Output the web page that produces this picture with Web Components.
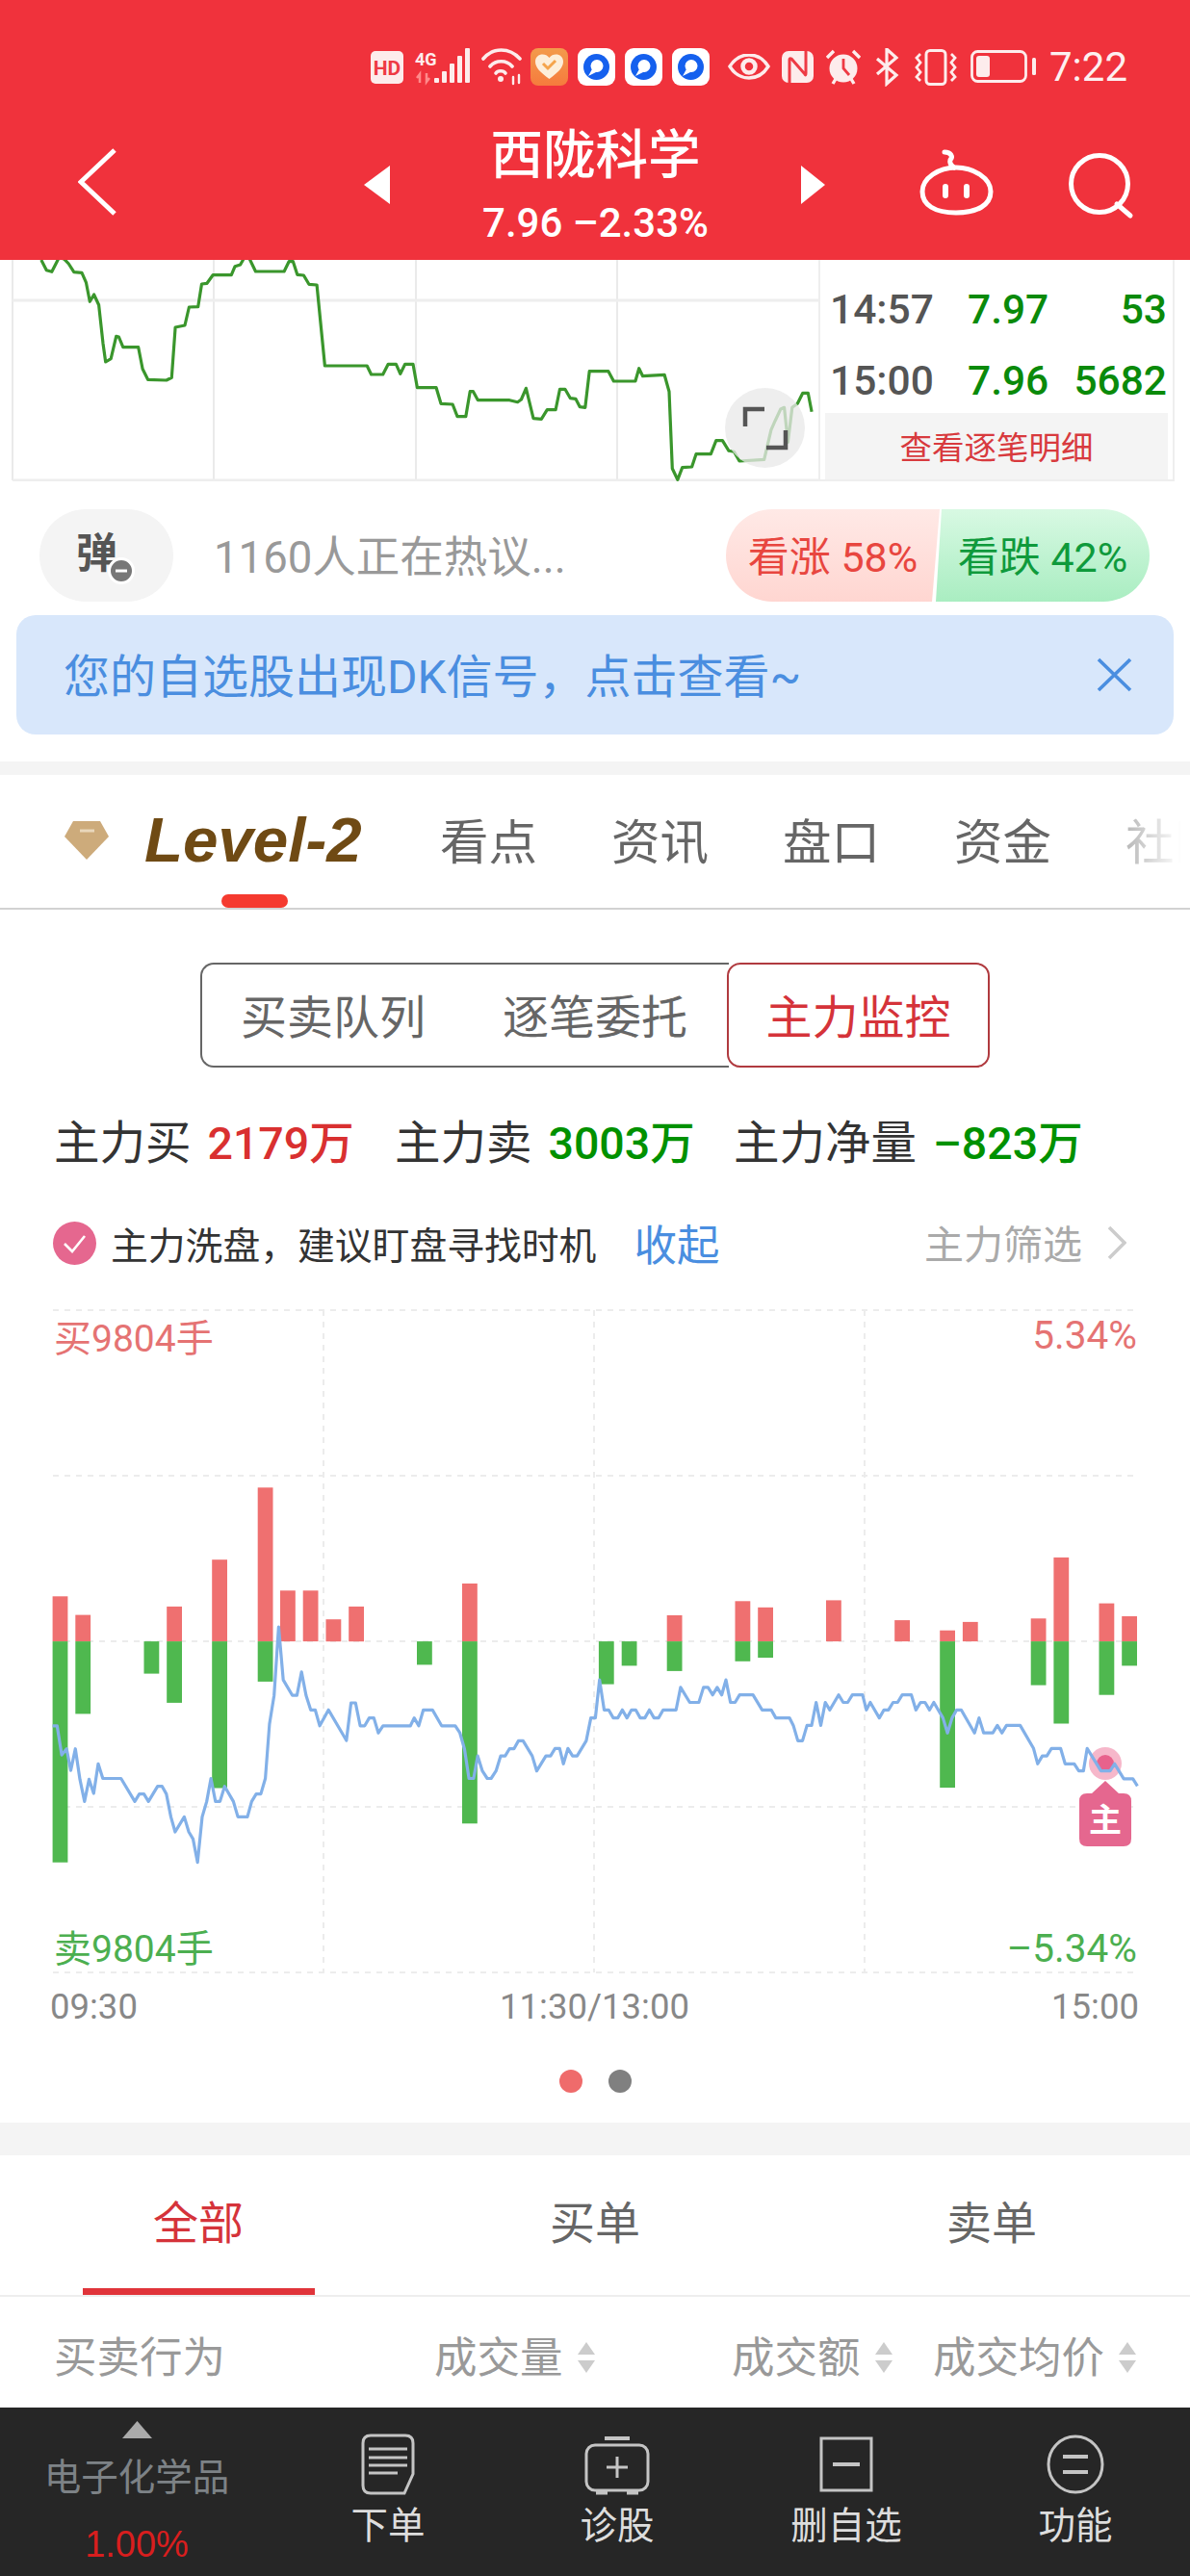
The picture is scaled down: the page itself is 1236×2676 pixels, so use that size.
<!DOCTYPE html>
<html lang="zh"><head><meta charset="utf-8"><title>西陇科学</title>
<style>
html,body{margin:0;padding:0;background:#fff}
body{width:1236px;height:2676px;overflow:hidden;font-family:Roboto,"Noto Sans CJK SC",sans-serif}
</style></head>
<body>
<app-shell>
  <stock-header></stock-header>
  <intraday-panel></intraday-panel>
  <sentiment-row></sentiment-row>
  <notice-banner>您的自选股出现DK信号，点击查看~</notice-banner>
  <level-tabs></level-tabs>
  <monitor-section></monitor-section>
  <trade-tabs></trade-tabs>
  <table-head></table-head>
  <bottom-bar></bottom-bar>
</app-shell>
<script>
function def(name, css, html){
  customElements.define(name, class extends HTMLElement{
    constructor(){super();const r=this.attachShadow({mode:'open'});
      r.innerHTML='<style>'+css+'</style>'+(typeof html==='function'?html():html);}
  });
}
const line=(pts,fx,fy)=>pts.map(p=>fx(p[0]).toFixed(1)+','+fy(p[1]).toFixed(1)).join(' ');

def('app-shell',':host{display:flex;flex-direction:column;width:1236px;height:2676px;overflow:hidden;background:#fff}','<slot></slot>');

/* ---------- header ---------- */
def('status-bar',`:host{display:flex;align-items:flex-start;height:100px;box-sizing:border-box;padding:50px 66px 0 0;justify-content:flex-end;color:#fff}
svg{display:block;flex:none}
.t{font-size:42px;line-height:40px;margin-left:14px;width:80px;white-space:nowrap;color:#fdf0f0}`,`
<svg width="34" height="40" style="margin-top:3px"><rect width="34" height="34" rx="5" fill="#fdecec"/><text x="17" y="25" text-anchor="middle" font-size="21" font-weight="700" font-family="Roboto" fill="#ee3a44">HD</text></svg>
<svg width="57" height="40" style="margin-left:12px"><text x="0" y="18" font-size="18" font-weight="700" font-family="Roboto" fill="#fdecec">4G</text><path d="M5 36V27l-3 4M12 26v9l3-4" stroke="#ff8a8a" stroke-width="2.5" fill="none"/><rect x="20" y="31" width="5" height="5" rx="1" fill="#fdecec"/><rect x="28" y="24" width="5" height="12" rx="1" fill="#fdecec"/><rect x="36" y="16" width="5" height="20" rx="1" fill="#fdecec"/><rect x="44" y="8" width="5" height="28" rx="1" fill="#fdecec"/><rect x="52" y="0" width="5" height="36" rx="1" fill="#fdecec"/></svg>
<svg width="43" height="40" style="margin-left:12px" fill="none" stroke="#fdecec" stroke-width="3.6" stroke-linecap="round"><path d="M2 11C12 -1 29 -1 40 11"/><path d="M9 19C15 12 26 12 32 19"/><path d="M15 26C17 23 23 23 25 26"/><circle cx="20" cy="32" r="3" fill="#fdecec" stroke="none"/><path d="M33 30V37M39 28V36" stroke-width="2.4"/></svg>
<svg width="39" height="40" style="margin-left:8px"><defs><linearGradient id="o" x1="0" y1="0" x2="0" y2="1"><stop offset="0" stop-color="#f39b4c"/><stop offset="1" stop-color="#f67b3d"/></linearGradient></defs><rect width="39" height="39" rx="8" fill="url(#o)"/><path d="M19.5 32C10 25 5 20 5 14C5 6 15 4 19.5 10C24 4 34 6 34 14C34 20 29 25 19.5 32Z" fill="#fdeeda"/><path d="M13 16L18 21L26 13" stroke="#f5a44c" stroke-width="3" fill="none"/></svg>
${[0,1,2].map(()=>`<svg width="39" height="40" style="margin-left:10px"><rect width="39" height="39" rx="9" fill="#fff"/><circle cx="19.5" cy="19.5" r="13.5" fill="#1560ee"/><circle cx="20" cy="18.5" r="6.5" fill="#fff"/><path d="M16 20L11 29L21 24Z" fill="#fff"/></svg>`).join('')}
<svg width="44" height="40" style="margin:6px 0 0 19px" fill="none" stroke="#fdecec"><path d="M2 13C12 -3 32 -3 42 13C32 29 12 29 2 13Z" stroke-width="3.4"/><circle cx="22" cy="13" r="6.5" stroke-width="4.5"/></svg>
<svg width="33" height="40" style="margin:3px 0 0 12px"><rect width="33" height="33" rx="7" fill="#fdecec"/><path d="M8 33V9Q8 7 10 8L24 24Q25 26 25 23V0" stroke="#ee3a44" stroke-width="3" fill="none"/></svg>
<svg width="36" height="40" style="margin:1px 0 0 13px"><circle cx="18" cy="20" r="14.5" fill="#fdecec"/><path d="M18 10V20L24 27" stroke="#ee3a44" stroke-width="2.8" fill="none"/><path d="M1 9L8 2M35 9L28 2M7 36L10 31M29 36L26 31" stroke="#fdecec" stroke-width="3.4"/></svg>
<svg width="27" height="40" style="margin-left:14px" fill="none" stroke="#fdecec" stroke-width="3.2"><path d="M3 11L23 28L13 37V1L23 10L3 27"/></svg>
<svg width="44" height="40" style="margin:1px 0 0 15px" fill="none" stroke="#fdecec"><rect x="12" y="1.5" width="20" height="35" rx="4" stroke-width="3"/><path d="M6 5L2 9L6 14L2 19L6 24L2 29L6 33M38 5L42 9L38 14L42 19L38 24L42 29L38 33" stroke-width="2.8"/></svg>
<svg width="68" height="40" style="margin:2px 0 0 14px"><rect x="1.5" y="1.5" width="56" height="31" rx="6" fill="none" stroke="#fdecec" stroke-width="2.8"/><rect x="6" y="6" width="14" height="22" rx="3" fill="#fdecec"/><rect x="64" y="8" width="4" height="18" rx="1.5" fill="#fdecec"/></svg>
<span class="t">7:22</span>`);

def('stock-header',`:host{display:block;height:270px;background:#f0323c;color:#fff;flex:none}
.nav{display:flex;align-items:flex-start}
svg{display:block;flex:none}
.mid{width:427px;text-align:center}
.title{font-size:54.5px;line-height:60px;margin-top:31px;font-weight:500}
.sub{font-size:42px;line-height:60px;margin-top:11px;font-weight:500}`,`
<status-bar></status-bar>
<div class="nav">
  <svg width="40" height="72" style="margin:54px 0 0 81px" fill="none" stroke="#fff" stroke-width="5"><path d="M38 2L3 35L38 68"/></svg>
  <svg width="27" height="40" style="margin:72px 0 0 257px"><path d="M27 0V40L0 20Z" fill="#fff"/></svg>
  <div class="mid"><div class="title">西陇科学</div><div class="sub">7.96 –2.33%</div></div>
  <svg width="25" height="40" style="margin-top:72px"><path d="M0 0V40L25 20Z" fill="#fff"/></svg>
  <svg width="78" height="70" style="margin:55px 0 0 98px" fill="none" stroke="#fff" stroke-width="5"><path d="M38 19C56 19 74 30 74 44C74 58 60 66 38 66C16 66 3 58 3 44C3 30 20 19 38 19Z"/><path d="M26 3C33 3 35 8 32 11C31 14 33 17 36 19" stroke-linecap="round"/><rect x="24" y="36" width="6" height="15" rx="3" fill="#fff" stroke="none"/><rect x="46" y="36" width="6" height="15" rx="3" fill="#fff" stroke="none"/></svg>
  <svg width="70" height="70" style="margin:58px 0 0 76px" fill="none" stroke="#fff" stroke-width="5"><circle cx="33" cy="33" r="29.5"/><path d="M51 54L65 66" stroke-linecap="round"/></svg>
</div>`);

/* ---------- intraday ---------- */
const green=[[78,30],[88,62],[98,67],[108,35],[112,22],[122,28],[130,42],[140,68],[155,70],[163,100],[170,160],[178,138],[187,170],[195,290],[200,348],[210,338],[220,268],[225,270],[233,302],[262,302],[270,370],[280,403],[315,405],[325,397],[332,240],[350,234],[358,177],[375,176],[382,105],[392,103],[403,77],[438,77],[445,50],[455,45],[462,25],[472,25],[484,66],[538,66],[547,35],[555,35],[563,76],[575,78],[585,106],[600,108],[615,360],[695,360],[703,387],[725,387],[735,355],[750,355],[758,385],[767,355],[782,355],[790,428],[826,428],[835,478],[857,480],[866,518],[882,518],[890,440],[896,440],[905,467],[965,467],[980,473],[987,465],[996,430],[1010,524],[1025,526],[1036,497],[1052,497],[1060,433],[1070,433],[1080,461],[1090,463],[1098,488],[1108,490],[1116,377],[1152,377],[1162,408],[1203,408],[1210,368],[1217,392],[1258,388],[1267,440],[1273,680],[1283,715],[1292,677],[1310,675],[1318,635],[1346,635],[1356,593],[1368,593],[1380,625],[1390,628],[1400,657],[1447,652],[1460,560],[1468,530],[1478,495],[1485,490],[1492,598],[1500,490],[1510,478],[1520,445],[1530,445],[1537,503]];
def('intraday-panel',`:host{display:flex;height:230px;flex:none;position:relative;overflow:hidden}
svg{display:block;flex:none}
.side{width:370px;height:230px;box-sizing:border-box;border:solid #eee;border-width:0 2px 2px 2px;padding:19px 5px 0 5px}
.row{display:grid;grid-template-columns:143px 91px 1fr;height:64px;align-items:center;font-size:42.5px;font-weight:500;color:#0a8a0a;padding:0 1px 0 5px;white-space:nowrap}
.row+.row{margin-top:10px}
.row b{font-weight:500;color:#555}.row i{font-style:normal;text-align:right}
.btn{margin-top:2px;height:69px;box-sizing:border-box;padding-bottom:3px;background:#f4f4f4;color:#d83a3e;font-size:33.5px;display:flex;align-items:center;justify-content:center}
.full{position:absolute;left:753px;top:133px;width:83px;height:83px;border-radius:50%;background:rgba(233,233,233,.76)}`,()=>`
<svg width="850" height="230">
  <g stroke="#e3e3e3" stroke-width="1.5"><path d="M13 0V229M222 0V229M432 0V229M641 0V229"/></g>
  <path d="M13 42H850M13 229H850" stroke="#eee" stroke-width="3"/>
  <polyline fill="none" stroke="#3a962c" stroke-width="3.2" stroke-linejoin="round" points="${line(green,x=>x/1.823,y=>y/3-10)}"/>
</svg>
<div class="side">
  <div class="row"><b>14:57</b><span>7.97</span><i>53</i></div>
  <div class="row"><b>15:00</b><span>7.96</span><i>5682</i></div>
  <div class="btn">查看逐笔明细</div>
</div>
<div class="full"><svg width="83" height="83" fill="none" stroke="#555" stroke-width="4.5"><path d="M21 40V22H41M63 44V62H43"/></svg></div>`);

/* ---------- sentiment ---------- */
def('sentiment-row',`:host{display:flex;align-items:center;height:96px;padding-top:29px;flex:none}
.b{width:139px;height:96px;border-radius:48px;background:#f4f4f4;margin-left:41px;display:flex;align-items:center;justify-content:flex-start;flex:none;position:relative}
.b span{font-size:43px;font-weight:700;color:#555;margin:-4px 0 0 38px;line-height:50px}
.b svg{position:absolute;left:71px;top:50px}
.hot{margin:-5px 0 0 42px;font-size:45.5px;color:#999;white-space:nowrap}
.vote{display:flex;margin-left:auto;margin-right:42px;height:96px;font-size:43px}
.vote div{width:222px;box-sizing:border-box;padding-bottom:5px;display:flex;align-items:center;justify-content:center;white-space:nowrap}
.up{background:linear-gradient(#ffe9e6,#ffd6d1);color:#e8463f;border-radius:48px 0 0 48px;clip-path:polygon(0 0,100% 0,calc(100% - 8px) 100%,0 100%)}
.dn{background:linear-gradient(#d8f9e3,#a9edc1);color:#0f9a3c;border-radius:0 48px 48px 0;margin-left:-4px;clip-path:polygon(6px 0,100% 0,100% 100%,0 100%)}`,`
<div class="b"><span>弹</span><svg width="28" height="28"><circle cx="14" cy="14" r="12.5" fill="#777" stroke="#fff" stroke-width="3"/><path d="M8 14H20" stroke="#fff" stroke-width="3"/></svg></div>
<div class="hot">1160人正在热议...</div>
<div class="vote"><div class="up">看涨 58%</div><div class="dn">看跌 42%</div></div>`);

def('notice-banner',`:host{display:block;padding:14px 17px 28px;flex:none}
.box{height:124px;box-sizing:border-box;background:#d8e7fb;border-radius:20px;display:flex;align-items:center;justify-content:space-between;padding:0 43px 0 49px;color:#4a8ee0;font-size:48px;white-space:nowrap}
.box span{margin-top:-5px}
svg{display:block}`,`<div class="box"><span><slot></slot></span><svg width="37" height="36" fill="none" stroke="#4a8ee0" stroke-width="3.6"><path d="M2 2L35 34M35 2L2 34"/></svg></div>`);

/* ---------- level tabs ---------- */
def('level-tabs',`:host{display:block;flex:none;border-top:14px solid #f4f4f4;border-bottom:2px solid #d2d2d2;height:138px;box-sizing:content-box;position:relative;overflow:hidden}
.row{display:flex;align-items:flex-start;height:124px;white-space:nowrap}
svg{display:block;flex:none;margin:48px 0 0 67px}
.lv{font:italic 700 65.5px/70px "Liberation Sans",sans-serif;color:#6f4a14;margin:33px 0 0 37px;width:307px;flex:none}
.t{font-size:50.5px;line-height:60px;margin-top:41px;color:#666;width:178px;flex:none}
.fade{position:absolute;right:0;top:0;width:90px;height:124px;background:linear-gradient(90deg,rgba(255,255,255,.35),#fff 90%)}
.ind{width:69px;height:14px;margin-left:230px;border-radius:7px;background:#f53a2f}`,`
<div class="row"><svg width="46" height="40"><path d="M9 0H37L46 16L23 40L0 16Z" fill="#cdab7b"/><path d="M16 10H31" stroke="#e9d7bb" stroke-width="3"/></svg><span class="lv">Level-2</span><span class="t">看点</span><span class="t">资讯</span><span class="t">盘口</span><span class="t">资金</span><span class="t">社区</span></div>
<div class="fade"></div>
<div class="ind"></div>`);

/* ---------- monitor ---------- */
const barsL=[[138,691,1293],[198,733,957],[378,0,866],[438,714,932],[557,608,1125],[677,445,884],[736,678,0],[796,678,0],[856,743,0],[916,714,0],[1095,0,846],[1214,662,1205]];
const barsR=[[15,0,890],[75,0,848],[194,734,860],[373,702,838],[433,716,830],[612,700,0],[792,745,0],[911,768,1124],[971,749,0],[1150,741,892],[1210,603,979],[1329,707,914],[1389,736,848]];
const blueL=[[138,984],[150,984],[162,1050],[175,1036],[186,1085],[198,1036],[210,1105],[222,1155],[234,1105],[246,1137],[258,1070],[270,1103],[318,1103],[354,1155],[366,1138],[378,1138],[390,1155],[414,1121],[426,1121],[437,1138],[449,1190],[460,1224],[484,1190],[496,1224],[507,1240],[519,1293],[531,1190],[543,1155],[554,1103],[566,1155],[578,1155],[590,1121],[613,1155],[625,1190],[650,1190],[661,1155],[673,1138],[685,1138],[697,1103],[708,980],[720,915],[732,760],[744,880],[768,915],[780,915],[792,862],[804,915],[816,948],[828,948],[840,984],[863,948],[910,1017],[922,932],[934,932],[946,984],[958,984],[970,966],[982,966],[994,1000],[1006,984],[1078,984],[1088,966],[1100,984],[1112,948],[1136,948],[1160,984],[1196,984],[1208,1000],[1220,1036],[1232,1103],[1244,1103],[1255,1052],[1267,1086],[1280,1103],[1290,1103],[1303,1086],[1315,1052],[1327,1052],[1338,1036],[1350,1036],[1362,1018],[1374,1018],[1398,1052],[1410,1086],[1434,1052],[1446,1052],[1458,1035],[1470,1035],[1480,1070],[1492,1035],[1504,1052],[1516,1052],[1540,1018],[1552,966],[1558,966]];
const blueR=[[0,966],[6,966],[17,880],[29,948],[41,948],[53,966],[65,966],[77,948],[89,966],[101,948],[112,948],[124,966],[136,966],[148,948],[160,966],[172,966],[184,948],[218,948],[230,897],[254,931],[278,931],[290,897],[302,897],[314,914],[326,897],[338,914],[349,880],[361,931],[373,931],[385,914],[420,914],[444,948],[468,948],[480,966],[516,966],[526,983],[538,1018],[550,1018],[562,983],[574,983],[586,931],[598,983],[610,931],[622,948],[645,914],[657,931],[669,931],[681,914],[708,914],[718,948],[728,931],[752,966],[764,948],[776,948],[788,931],[800,931],[812,914],[836,914],[848,948],[860,931],[872,931],[884,948],[895,931],[919,966],[931,1000],[943,966],[955,948],[967,948],[1002,1000],[1014,966],[1026,1000],[1050,1000],[1062,983],[1074,1000],[1086,983],[1122,983],[1157,1035],[1168,1070],[1180,1052],[1192,1052],[1204,1035],[1228,1035],[1240,1070],[1264,1070],[1276,1086],[1288,1086],[1298,1035],[1334,1086],[1358,1086],[1370,1070],[1394,1104],[1418,1104],[1430,1120]];
const SX=1568/620,SY=1568/720;
const zy=v=>v/SY;
function barsSvg(list,off){
  return list.map(b=>{
    const x=(off+b[0]/SX).toFixed(1),w=(40/SX).toFixed(1),base=zy(793);let s='';
    if(b[1])s+=`<rect x="${x}" y="${zy(b[1]).toFixed(1)}" width="${w}" height="${(base-zy(b[1])).toFixed(1)}" fill="#ef7070"/>`;
    if(b[2])s+=`<rect x="${x}" y="${base.toFixed(1)}" width="${w}" height="${(zy(b[2])-base).toFixed(1)}" fill="#4fb84f"/>`;
    return s;}).join('');
}
def('flow-chart',`:host{display:block;height:720px;flex:none}svg{display:block}
text{font-family:Roboto,"Noto Sans CJK SC",sans-serif;font-size:39px}
.p{font-size:40.5px}`,()=>{
  const pts=blueL.map(p=>[p[0]/SX,p[1]/SY]).concat(blueR.map(p=>[616+p[0]/SX,p[1]/SY]));
  return `<svg width="1236" height="720">
  <g stroke="#ececec" stroke-width="2" stroke-dasharray="6 6" fill="none"><path d="M55 20H1181M55 192H1181M55 364H1181M55 536H1181M55 708H1181M336 20V708M617 20V708M898 20V708"/></g>
  ${barsSvg(barsL,0)}${barsSvg(barsR,616)}
  <circle cx="1148" cy="491" r="17" fill="#f190ae" opacity=".65"/><circle cx="1148" cy="491" r="9" fill="#e8628c"/>
  <polyline fill="none" stroke="#82b0e8" stroke-width="3.2" stroke-linejoin="round" points="${line(pts,x=>x,y=>y)}"/>
  <path d="M1148 509L1162 522H1167Q1175 522 1175 530V569Q1175 577 1167 577H1129Q1121 577 1121 569V530Q1121 522 1129 522H1134Z" fill="#e5678f"/>
  <text x="1148" y="562" text-anchor="middle" fill="#fff" font-weight="700" style="font-size:34px">主</text>
  <text x="56" y="63" fill="#e57373">买9804手</text>
  <text class="p" x="1181" y="60" text-anchor="end" fill="#e57373">5.34%</text>
  <text x="56" y="697" fill="#4caf50">卖9804手</text>
  <text class="p" x="1181" y="697" text-anchor="end" fill="#4caf50">–5.34%</text>
</svg>`;});

def('monitor-section',`:host{display:block;flex:none;height:1260px;box-sizing:border-box;padding-top:55px;color:#333}
.seg{display:flex;margin-left:208px;width:820px;height:109px;font-size:48px}
.l{display:flex;width:549px;margin-right:-2px;box-sizing:border-box;border:2px solid #666;border-right:none;border-radius:14px 0 0 14px;color:#666;padding-bottom:4px}
.l span{width:272px;display:flex;align-items:center;justify-content:center}
.s{width:273px;box-sizing:border-box;position:relative;background:#fff;border:2px solid #b03a3f;border-radius:14px;color:#d5333a;display:flex;align-items:center;justify-content:center;padding-bottom:4px}
.sum{display:grid;grid-template-columns:354px 352px auto;margin:49px 0 0 56px;font-size:47.5px;line-height:60px;white-space:nowrap}
.sum div{display:flex;gap:17px}.sum b{font-weight:500;font-size:46.5px}
.r{color:#d93030}.g{color:#009100}
.tip{display:flex;align-items:center;height:60px;margin-top:43px;padding:0 66px 0 55px;white-space:nowrap}
.tip svg{display:block;flex:none}
.m{font-size:38.8px;margin-left:15px;color:#333}
.up{font-size:44.5px;margin-left:39px;color:#4a8ee0;margin-top:-2px}
.flt{font-size:41px;color:#aaa;margin:-2px 0 0 auto}
.ax{display:flex;justify-content:space-between;padding:2px 53px 0 52px;height:44px;line-height:44px;font-size:36.5px;color:#888}
.dots{display:flex;justify-content:center;gap:27px;margin-top:43px}
.dots i{width:24px;height:24px;border-radius:50%;background:#808080}.dots i:first-child{background:#ef6b6b}`,`
<div class="seg"><div class="l"><span>买卖队列</span><span>逐笔委托</span></div><div class="s">主力监控</div></div>
<div class="sum"><div>主力买<b class="r">2179万</b></div><div>主力卖<b class="g">3003万</b></div><div>主力净量<b class="g">–823万</b></div></div>
<div class="tip"><svg width="45" height="45"><circle cx="22.5" cy="22.5" r="22.5" fill="#e5678f"/><path d="M12 23L20 31L33 15" stroke="#fff" stroke-width="2.6" fill="none"/></svg><span class="m">主力洗盘，建议盯盘寻找时机</span><span class="up">收起</span><span class="flt">主力筛选</span><svg width="20" height="36" style="margin-left:26px" fill="none" stroke="#ccc" stroke-width="3.6"><path d="M2 2L18 18L2 34"/></svg></div>
<flow-chart style="margin-top:20px"></flow-chart>
<div class="ax"><span>09:30</span><span>11:30/13:00</span><span>15:00</span></div>
<div class="dots"><i></i><i></i></div>`);

/* ---------- trade tabs ---------- */
def('trade-tabs',`:host{display:flex;flex:none;height:145px;border-top:34px solid #f4f4f4;border-bottom:2px solid #eee;font-size:47px;color:#666}
div{width:412px;box-sizing:border-box;display:flex;flex-direction:column;align-items:center}
span{height:138px;box-sizing:border-box;padding-bottom:5px;display:flex;align-items:center}
i{display:block;width:241px;height:7px}
.a{color:#d5333a}.a i{background:#e0343a}`,`<div class="a"><span>全部</span><i></i></div><div><span>买单</span></div><div><span>卖单</span></div>`);

const arrows=`<svg width="18" height="32" style="display:block;margin-left:17px;flex:none"><path d="M9 0L18 13H0Z" fill="#ccc"/><path d="M0 19H18L9 32Z" fill="#ccc"/></svg>`;
def('table-head',`:host{display:flex;align-items:center;flex:none;height:115px;box-sizing:border-box;padding-top:10px;font-size:44.5px;color:#999;white-space:nowrap}
span{flex:none;margin-top:-6px}svg{margin-top:0}`,`<span style="margin-left:56px;width:177px">买卖行为</span><span style="margin-left:218px;width:132px">成交量</span>${arrows}<span style="margin-left:142px;width:132px">成交额</span>${arrows}<span style="margin-left:42px;width:176px">成交均价</span>${arrows}`);

/* ---------- bottom ---------- */
def('bar-item',`:host{display:flex;flex-direction:column;align-items:center;width:238px;flex:none}
.i{height:71px;padding-top:27px}
.l{font-size:38.5px;line-height:50px;color:#ddd;white-space:nowrap}`,`<div class="i"><slot name="i"></slot></div><div class="l"><slot></slot></div>`);
def('bottom-bar',`:host{display:flex;flex:none;height:176px;background:#262626;overflow:hidden}
.left{width:284px;display:flex;flex-direction:column;align-items:center;flex:none}
svg{display:block}
.a{margin-top:14px}
.n{font-size:38.5px;line-height:50px;margin-top:16px;color:#7d8286;white-space:nowrap}
.v{font:38px/50px "Liberation Sans",sans-serif;margin-top:19px;color:#d81e1e}`,`
<div class="left"><svg class="a" width="31" height="18"><path d="M15.5 0L31 18H0Z" fill="#aaa"/></svg><div class="n">电子化学品</div><div class="v">1.00%</div></div>
<bar-item><svg slot="i" width="56" height="64" fill="none" stroke="#c4c4c4" stroke-width="3"><path d="M10 2H46Q54 2 54 10V42L45 62H10Q2 62 2 54V10Q2 2 10 2Z"/><path d="M8 16H48M8 25H48M8 33H48M8 41H38"/></svg>下单</bar-item>
<bar-item><svg slot="i" width="68" height="64" fill="none" stroke="#c4c4c4" stroke-width="3"><path d="M21 5H47" stroke-width="4"/><rect x="2" y="12" width="64" height="47" rx="9"/><path d="M34 24V46M23 35H45"/><path d="M12 61H24M44 61H56" stroke-width="5"/></svg>诊股</bar-item>
<bar-item><svg slot="i" width="56" height="64" fill="none" stroke="#c4c4c4" stroke-width="3"><rect x="2" y="5" width="52" height="54"/><path d="M14 32H42" stroke-width="4"/></svg>删自选</bar-item>
<bar-item><svg slot="i" width="60" height="64" fill="none" stroke="#c4c4c4" stroke-width="3"><ellipse cx="30" cy="32" rx="28" ry="29"/><path d="M17 24H43M17 40H43" stroke-width="4"/></svg>功能</bar-item>`);
</script>
</body></html>
